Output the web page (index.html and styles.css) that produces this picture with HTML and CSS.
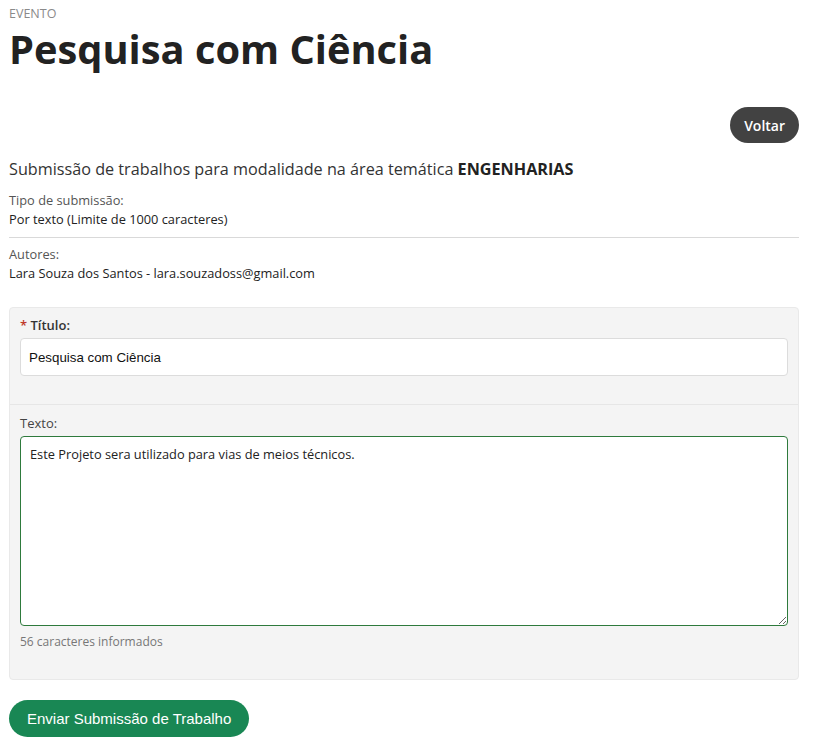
FILE: index.html
```html
<!DOCTYPE html>
<html lang="pt-BR">
<head>
<meta charset="utf-8">
<title>Pesquisa com Ciência</title>
<link rel="stylesheet" href="styles.css">
</head>
<body>
<div class="page">
  <div class="eyebrow">EVENTO</div>
  <h1 class="title">Pesquisa com Ciência</h1>
  <div class="actions">
    <button class="btn-back" type="button">Voltar</button>
  </div>
  <p class="lead">Submissão de trabalhos para modalidade na área temática <strong>ENGENHARIAS</strong></p>
  <div class="info">
    <div class="info-label">Tipo de submissão:</div>
    <div class="info-value">Por texto (Limite de 1000 caracteres)</div>
  </div>
  <hr class="divider">
  <div class="info after-divider">
    <div class="info-label">Autores:</div>
    <div class="info-value">Lara Souza dos Santos - lara.souzadoss@gmail.com</div>
  </div>
  <form class="card">
    <div class="card-section first">
      <label class="field-label strong"><span class="req">*</span> Título:</label>
      <input class="text-input" type="text" value="Pesquisa com Ciência">
    </div>
    <div class="card-section second">
      <label class="field-label">Texto:</label>
      <textarea class="text-area">Este Projeto sera utilizado para vias de meios técnicos.</textarea>
      <div class="counter">56 caracteres informados</div>
    </div>
  </form>
  <button class="btn-submit" type="button">Enviar Submissão de Trabalho</button>
</div>
</body>
</html>
```

FILE: styles.css
```css
* { box-sizing: border-box; }
html, body { margin: 0; padding: 0; background: #fff; }
body {
  font-family: "Open Sans", "Liberation Sans", sans-serif;
  color: #333;
}
.page {
  width: 790px;
  margin-left: 9px;
  padding-top: 6px;
}
.eyebrow {
  font-size: 12.5px;
  line-height: 16px;
  color: #8a8a8a;
}
.title {
  margin: 0;
  font-size: 39.8px;
  line-height: 54px;
  font-weight: 700;
  color: #222;
}
.actions {
  display: flex;
  justify-content: flex-end;
  margin-top: 31px;
}
.btn-back {
  font-family: "Open Sans", sans-serif;
  font-size: 14px;
  font-weight: 600;
  color: #fff;
  background: #424242;
  border: none;
  border-radius: 18px;
  height: 36px;
  padding: 0 14px;
}
.lead {
  margin: 14px 0 0;
  font-size: 16.2px;
  line-height: 24px;
  color: #333;
}
.lead strong { font-weight: 700; color: #222; }
.info { margin-top: 10px; }
.info.after-divider { margin-top: 7px; }
.info-label {
  font-size: 12.8px;
  line-height: 19px;
  color: #555;
}
.info-value {
  font-size: 12.8px;
  line-height: 19px;
  color: #222;
}
.divider {
  border: none;
  border-top: 1px solid #d9d9d9;
  margin: 8px 0 0;
}
.card {
  margin-top: 24px;
  background: #f4f4f4;
  border: 1px solid #e9e9e9;
  border-radius: 4px;
}
.card-section {
  border-top: 1px solid #e6e6e6;
}
.card-section.first {
  border-top: none;
  padding: 9px 10px 28px;
}
.card-section.second {
  padding: 10px 10px 29px;
}
.field-label {
  display: block;
  font-size: 13px;
  line-height: 16px;
  color: #444;
  margin-bottom: 5px;
}
.field-label.strong { font-weight: 600; color: #333; }
.req { color: #c0392b; }
.text-input {
  display: block;
  width: 100%;
  height: 38px;
  border: 1px solid #dcdcdc;
  border-radius: 4px;
  background: #fff;
  padding: 0 8px;
  font-family: "Liberation Sans", Arial, sans-serif;
  font-size: 13.333px;
  color: #111;
}
.text-area {
  display: block;
  width: 100%;
  height: 190px;
  border: 1px solid #2e7a3c;
  border-radius: 4px;
  background: #fff;
  padding: 8px 9px;
  font-family: "Open Sans", sans-serif;
  font-size: 12.8px;
  line-height: 19px;
  color: #222;
  resize: vertical;
  outline: none;
}
.counter {
  margin-top: 8px;
  font-size: 12px;
  line-height: 16px;
  color: #777;
}
.btn-submit {
  margin-top: 20px;
  height: 37px;
  padding: 0 18px;
  border: none;
  border-radius: 19px;
  background: #198754;
  color: #fff;
  font-family: "Liberation Sans", Arial, sans-serif;
  font-size: 15px;
}
```
